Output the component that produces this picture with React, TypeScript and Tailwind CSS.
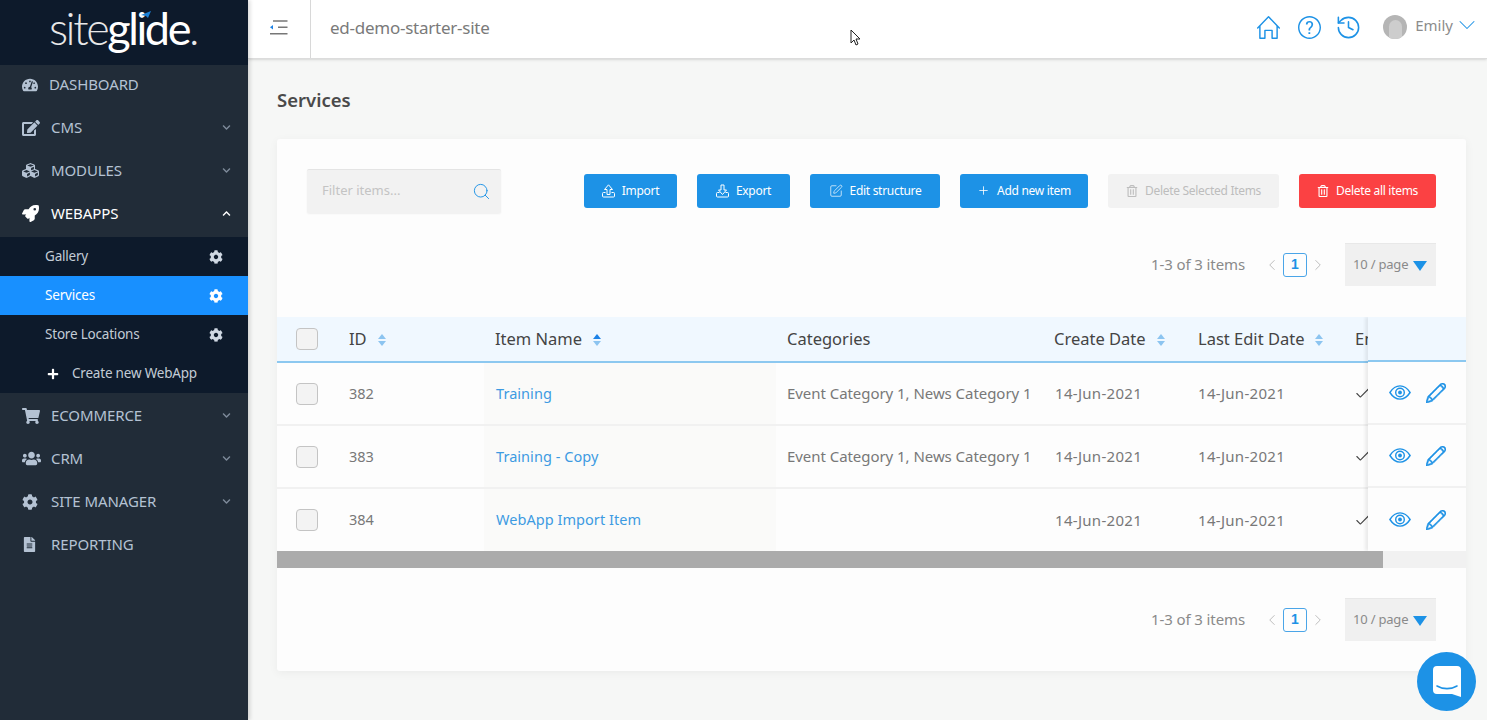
import {
  FaTachometerAlt,
  FaEdit,
  FaCubes,
  FaRocket,
  FaShoppingCart,
  FaUsers,
  FaCog,
  FaFileAlt,
  FaPlus,
  FaChevronDown,
  FaChevronUp,
  FaRegTrashAlt,
} from 'react-icons/fa'
import { SlHome, SlQuestion, SlPencil } from 'react-icons/sl'
import { ChevronDown, ChevronLeft, ChevronRight, History, Search, Plus, Check, SquarePen } from 'lucide-react'
import type { ReactNode } from 'react'

const font = 'font-["Noto_Sans",sans-serif]'

const navBottom = [
  { label: 'ECOMMERCE', icon: <FaShoppingCart size={18} />, chevron: true },
  { label: 'CRM', icon: <FaUsers size={19} />, chevron: true },
  { label: 'SITE MANAGER', icon: <FaCog size={16} />, chevron: true },
  { label: 'REPORTING', icon: <FaFileAlt size={15} /> },
]
const rows = [
  { id: 382, name: 'Training', cats: 'Event Category 1, News Category 1' },
  { id: 383, name: 'Training - Copy', cats: 'Event Category 1, News Category 1' },
  { id: 384, name: 'WebApp Import Item', cats: '' },
]

function NavRow({
  label,
  icon,
  chevron,
  active,
  className = 'pt-[2px]',
  iconWidth = 'w-[29px]',
}: {
  label: string
  icon: ReactNode
  chevron?: boolean
  active?: boolean
  className?: string
  iconWidth?: string
}) {
  return (
    <div className={`h-[43px] flex items-center pl-[22px] pr-[17px] ${className} ${active ? 'text-white' : 'text-[#b4c2d3]'}`}>
      <span className={`${iconWidth} flex items-center shrink-0`}>{icon}</span>
      <span className="text-[15px] tracking-[-0.1px] flex-1">{label}</span>
      {chevron && (active ? <FaChevronUp size={9} /> : <FaChevronDown size={9} className="text-[#7d8a99]" />)}
    </div>
  )
}

function SubRow({ label, active }: { label: string; active?: boolean }) {
  return (
    <div className={`h-[39px] flex items-center pl-[45px] pr-[25px] justify-between ${active ? 'bg-[#1890ff] text-white' : 'text-[#c3ccd6]'}`}>
      <span className="text-[13.5px] tracking-[-0.2px]">{label}</span>
      <FaCog size={14} className={active ? 'text-white' : 'text-[#cfd8e3]'} />
    </div>
  )
}

function TrayArrow({ down }: { down?: boolean }) {
  return (
    <svg width="13" height="14" viewBox="0 0 13 14" fill="none" stroke="currentColor" strokeWidth="1">
      <path d="M3.5 8.5H1.5a1 1 0 0 0-1 1v2.5a1 1 0 0 0 1 1h10a1 1 0 0 0 1-1V9.5a1 1 0 0 0-1-1H9.5" />
      {down ? (
        <path d="M5 1h3v5h2.5L6.5 10.5 2.5 6H5z" />
      ) : (
        <path d="M6.5 .8l4 4.7H8v5H5v-5H2.5z" />
      )}
    </svg>
  )
}

function ActionButton({ icon, label, className }: { icon: ReactNode; label: string; className: string }) {
  return (
    <button className={`h-[34px] rounded-[3px] flex items-center justify-center gap-[7px] text-[12px] tracking-[-0.3px] ${className}`}>
      {icon}
      {label}
    </button>
  )
}

function Pager() {
  return (
    <div className="flex items-center justify-end pr-[30px]">
      <span className="text-[15px] text-[#8a8a8a] tracking-[-0.1px] mr-[18px]">1-3 of 3 items</span>
      <ChevronLeft size={18} strokeWidth={1} className="text-[#a8a8a8] mr-[2px]" />
      <span className="w-[24px] h-[24px] border border-[#4aa5e8] rounded-[3px] flex items-center justify-center text-[14px] font-bold text-[#1d92e6] font-['Liberation_Sans',sans-serif]">1</span>
      <ChevronRight size={18} strokeWidth={1} className="text-[#a8a8a8] ml-[2px]" />
      <div className="ml-[18px] w-[91px] h-[43px] bg-[#f0f0f0] border-t border-[#e8e8e8] flex items-center pl-[8px] gap-[5px]">
        <span className="text-[13px] text-[#8a8a8a] tracking-[-0.2px]">10 / page</span>
        <span className="w-0 h-0 border-x-[7px] border-x-transparent border-t-[10px] border-t-[#1d92e6] mt-[2px]" />
      </div>
    </div>
  )
}

function SortArrows({ active }: { active?: boolean }) {
  return (
    <span className="inline-flex flex-col gap-[2px] ml-[11px] mt-[2px]">
      <span className={`w-0 h-0 border-x-[4px] border-x-transparent border-b-[5px] ${active ? 'border-b-[#1d82e6]' : 'border-b-[#8cc4f0]'}`} />
      <span className="w-0 h-0 border-x-[4px] border-x-transparent border-t-[5px] border-t-[#8cc4f0]" />
    </span>
  )
}

function Box() {
  return <span className="block w-[22px] h-[22px] rounded-[4px] border border-[#c4c4c4] bg-[#f3f3f3]" />
}

function EyeIcon() {
  return (
    <svg width="22" height="15" viewBox="0 0 22 15" fill="none" stroke="currentColor" strokeWidth="1.4">
      <path d="M.9 7.5C3.8 3 7.2.9 11 .9s7.2 2.1 10.1 6.6C18.2 12 14.8 14.1 11 14.1S3.8 12 .9 7.5z" />
      <circle cx="11" cy="7.5" r="4.3" />
      <circle cx="11" cy="7.5" r="1.9" fill="currentColor" stroke="none" />
    </svg>
  )
}

export default function App() {
  return (
    <div className={`w-[1487px] h-[720px] flex overflow-hidden bg-[#f6f7f6] ${font}`}>
      {/* Sidebar */}
      <aside className="w-[248px] shrink-0 bg-[#212c38] flex flex-col shadow-[2px_0_4px_rgba(0,0,0,0.15)] z-10">
        <div className="h-[65px] bg-[#0d1a2b] flex items-center justify-center pb-[8px] pr-[2px]">
          <span className="relative text-[45px] leading-none tracking-[-2.4px] text-[#e8e8e8] font-['Lato',sans-serif] font-light">
            site<span className="font-normal text-white">glide</span>.
            <svg width="10" height="7" viewBox="0 0 10 7" className="absolute left-[92px] top-[5px]">
              <path d="M0 4 10 0 7 7 5 5z" fill="#1d82d6" />
            </svg>
          </span>
        </div>
        <NavRow label="DASHBOARD" icon={<FaTachometerAlt size={16} />} className="pb-[4px]" iconWidth="w-[27px]" />
        <NavRow label="CMS" icon={<FaEdit size={18} />} chevron className="pb-[4px]" />
        <NavRow label="MODULES" icon={<FaCubes size={17} />} chevron className="pb-[4px]" />
        <NavRow label="WEBAPPS" icon={<FaRocket size={17} />} chevron active className="pb-[4px]" />
        <div className="bg-[#0d1a2b]">
          <SubRow label="Gallery" />
          <SubRow label="Services" active />
          <SubRow label="Store Locations" />
          <div className="h-[39px] flex items-center pl-[47px] gap-[13px] text-[#c3ccd6]">
            <FaPlus size={12} className="text-white" />
            <span className="text-[13.5px] tracking-[-0.2px]">Create new WebApp</span>
          </div>
        </div>
        {navBottom.map((n) => (
          <NavRow key={n.label} label={n.label} icon={n.icon} chevron={n.chevron} />
        ))}
      </aside>

      <div className="flex-1 min-w-0 flex flex-col">
        {/* Top bar */}
        <header className="h-[59px] shrink-0 bg-white border-b border-[#dcdcdc] shadow-sm flex items-center">
          <div className="w-[63px] h-full border-r border-[#d8d8d8] flex items-center pl-[22px]">
            <svg width="18" height="15" viewBox="0 0 18 15" fill="none" stroke="#777" strokeWidth="1.4" className="mb-[3px]">
              <path d="M3 1h14.5M8 7.3h9.5M0 13.7h17.5" />
              <path d="M0 7.3 3 5v4.6z" fill="#1d82e6" stroke="none" />
            </svg>
          </div>
          <span className="ml-[19px] text-[17px] text-[#7a7a7a] tracking-[-0.25px] mb-[2px]">ed-demo-starter-site</span>
          <div className="ml-auto flex items-center pr-[6px] pb-[3px] text-[#1d92e6]">
            <SlHome size={23} />
            <SlQuestion size={23} className="ml-[18px]" />
            <History size={27} strokeWidth={1.4} className="ml-[14px]" />
            <span className="ml-[21px] w-[24px] h-[24px] rounded-full bg-[#b5b5b5] overflow-hidden flex items-end justify-center mb-[1px]">
              <span className="w-[13px] h-[19px] rounded-t-full bg-[#cdcdcd]" />
            </span>
            <span className="ml-[8px] text-[15px] text-[#8c8c8c] mb-[5px]">Emily</span>
            <ChevronDown size={28} strokeWidth={0.9} className="mb-[5px]" />
          </div>
        </header>

        <main className="flex-1 min-h-0 pl-[29px] pr-[21px]">
          <h1 className="text-[18.5px] font-semibold text-[#4a4a4a] mt-[29px] h-[51px] leading-[24px]">Services</h1>
          <section className="h-[532px] bg-[#fdfdfd] rounded-[3px] shadow-[0_2px_10px_rgba(0,0,0,0.05)] flex flex-col">
            {/* Toolbar */}
            <div className="flex items-center pl-[30px] pr-[30px] pt-[29px] h-[74px]">
              <div className="w-[194px] h-[44px] bg-[#f2f2f2] border-t border-[#e4e4e4] rounded-[2px] flex items-center justify-between pl-[15px] pr-[10px] shadow-[0_1px_2px_rgba(0,0,0,0.06)]">
                <span className="text-[13px] text-[#c4c4c4]">Filter items...</span>
                <Search size={19} strokeWidth={1.2} className="text-[#1d92e6]" />
              </div>
              <div className="ml-auto flex items-center gap-[20px]">
                <ActionButton icon={<TrayArrow />} label="Import" className="w-[93px] bg-[#1d92e6] text-white" />
                <ActionButton icon={<TrayArrow down />} label="Export" className="w-[93px] bg-[#1d92e6] text-white" />
                <ActionButton icon={<SquarePen size={14} strokeWidth={1.2} />} label="Edit structure" className="w-[130px] bg-[#1d92e6] text-white" />
                <ActionButton icon={<Plus size={13} strokeWidth={1.5} />} label="Add new item" className="w-[128px] bg-[#1d92e6] text-white" />
                <ActionButton icon={<FaRegTrashAlt size={12} />} label="Delete Selected Items" className="w-[171px] bg-[#f2f2f2] text-[#bdbdbd]" />
                <ActionButton icon={<FaRegTrashAlt size={12} />} label="Delete all items" className="w-[137px] bg-[#fb4143] text-white" />
              </div>
            </div>

            <div className="mt-[30px]">
              <Pager />
            </div>

            {/* Table */}
            <div className="relative mt-[31px] overflow-hidden">
              <table className="table-fixed w-[1300px] border-collapse">
                <colgroup>
                  <col className="w-[61px]" />
                  <col className="w-[146px]" />
                  <col className="w-[292px]" />
                  <col className="w-[267px]" />
                  <col className="w-[144px]" />
                  <col className="w-[167px]" />
                  <col className="w-[223px]" />
                </colgroup>
                <thead>
                  <tr className="h-[45px] bg-[#f0f8ff] border-b-2 border-[#8cc8f0] text-left text-[16.5px] text-[#444]">
                    <th className="pl-[19px] font-normal"><Box /></th>
                    <th className="pl-[11px] font-normal"><span className="flex items-center">ID<SortArrows /></span></th>
                    <th className="pl-[11px] font-normal"><span className="flex items-center">Item Name<SortArrows active /></span></th>
                    <th className="pl-[11px] font-normal">Categories</th>
                    <th className="pl-[11px] font-normal"><span className="flex items-center">Create Date<SortArrows /></span></th>
                    <th className="pl-[11px] font-normal"><span className="flex items-center">Last Edit Date<SortArrows /></span></th>
                    <th className="pl-[1px] font-normal">Enabled</th>
                  </tr>
                </thead>
                <tbody>
                  {rows.map((r) => (
                    <tr key={r.id} className="h-[63px] border-b-2 border-[#f1f1f1] last:border-b-0 text-[14.5px] text-[#787878]">
                      <td className="pl-[19px]"><Box /></td>
                      <td className="pl-[11px]">{r.id}</td>
                      <td className="pl-[12px] bg-[#fafaf9] text-[#3d9ae2] tracking-[0.05px]">{r.name}</td>
                      <td className="pl-[11px] whitespace-nowrap text-[15px] tracking-[-0.05px]">{r.cats}</td>
                      <td className="pl-[12px] text-[15px] tracking-[0.3px]">14-Jun-2021</td>
                      <td className="pl-[11px] text-[15px] tracking-[0.3px]">14-Jun-2021</td>
                      <td className="pl-0"><Check size={17} strokeWidth={1.5} className="text-[#444]" /></td>
                    </tr>
                  ))}
                </tbody>
              </table>

              {/* pinned action column */}
              <div className="absolute right-0 top-0 w-[98px] bottom-0 bg-[#fdfdfd] shadow-[-3px_0_3px_rgba(0,0,0,0.07)] flex flex-col">
                <div className="h-[45px] bg-[#f0f8ff] border-b-2 border-[#8cc8f0]" />
                {rows.map((r) => (
                  <div key={r.id} className="h-[63px] border-b-2 border-[#f1f1f1] last:border-b-0 flex items-center gap-[15px] pl-[21px] text-[#1d92e6]">
                    <EyeIcon />
                    <SlPencil size={20} stroke="currentColor" strokeWidth={30} />
                  </div>
                ))}
              </div>
            </div>

            {/* Scrollbar */}
            <div className="h-[17px] bg-[#f1f1f1] shrink-0">
              <div className="h-full w-[1106px] bg-[#ababab]" />
            </div>

            <div className="mt-[30px]">
              <Pager />
            </div>
          </section>
        </main>
      </div>

      {/* Chat launcher */}
      <div className="fixed right-[11px] bottom-[9px] z-20 w-[59px] h-[59px] rounded-full bg-[#1d92e6] flex items-center justify-center">
        <svg width="28" height="31" viewBox="0 0 28 31">
          <path d="M4 0h20a4 4 0 0 1 4 4v27l-9-3H4a4 4 0 0 1-4-4V4a4 4 0 0 1 4-4z" fill="#fff" />
          <path d="M4 20c6 3.5 14 3.5 20 0" fill="none" stroke="#1d92e6" strokeWidth="1.6" strokeLinecap="round" />
        </svg>
      </div>

      {/* Mouse cursor */}
      <svg width="12" height="17" viewBox="0 0 12 17" className="fixed left-[850px] top-[29px] z-20">
        <path d="M1 1v13l3-3 2 5 2-1-2-5h4z" fill="#fff" stroke="#222" strokeWidth="1" />
      </svg>
    </div>
  )
}
